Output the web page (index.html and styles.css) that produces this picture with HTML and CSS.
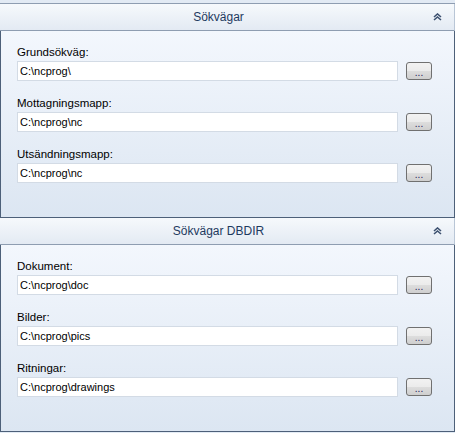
FILE: index.html
```html
<!DOCTYPE html>
<html lang="sv">
<head>
  <meta charset="UTF-8" />
  <title>Sökvägar</title>
  <link rel="stylesheet" href="styles.css">
</head>
<body>
  <div class="top-strip"></div>

  <!-- Sökvägar -->
  <div class="group">
    <div class="group-header">
      <span class="group-title">Sökvägar</span>
      <svg class="collapse" width="9" height="8" viewBox="0 0 9 8">
        <path d="M1 4 L4.5 1 L8 4 M1 7 L4.5 4 L8 7" fill="none" stroke="#3d5170" stroke-width="1.6"/>
      </svg>
    </div>
    <div class="group-body">
      <div class="field">
        <label>Grundsökväg:</label>
        <div class="field-row">
          <input type="text" value="C:\ncprog\" />
          <button class="browse">...</button>
        </div>
      </div>
      <div class="field">
        <label>Mottagningsmapp:</label>
        <div class="field-row">
          <input type="text" value="C:\ncprog\nc" />
          <button class="browse">...</button>
        </div>
      </div>
      <div class="field">
        <label>Utsändningsmapp:</label>
        <div class="field-row">
          <input type="text" value="C:\ncprog\nc" />
          <button class="browse">...</button>
        </div>
      </div>
    </div>
  </div>

  <!-- Sökvägar DBDIR -->
  <div class="group">
    <div class="group-header">
      <span class="group-title">Sökvägar DBDIR</span>
      <svg class="collapse" width="9" height="8" viewBox="0 0 9 8">
        <path d="M1 4 L4.5 1 L8 4 M1 7 L4.5 4 L8 7" fill="none" stroke="#3d5170" stroke-width="1.6"/>
      </svg>
    </div>
    <div class="group-body">
      <div class="field">
        <label>Dokument:</label>
        <div class="field-row">
          <input type="text" value="C:\ncprog\doc" />
          <button class="browse">...</button>
        </div>
      </div>
      <div class="field">
        <label>Bilder:</label>
        <div class="field-row">
          <input type="text" value="C:\ncprog\pics" />
          <button class="browse">...</button>
        </div>
      </div>
      <div class="field">
        <label>Ritningar:</label>
        <div class="field-row">
          <input type="text" value="C:\ncprog\drawings" />
          <button class="browse">...</button>
        </div>
      </div>
    </div>
  </div>
</body>
</html>
```

FILE: styles.css
```css
* {
  box-sizing: border-box;
  margin: 0;
  padding: 0;
}

body {
  font-family: 'Liberation Sans', Arial, sans-serif;
  font-size: 11px;
  background-color: #e4ecf5;
  width: 455px;
}

.top-strip {
  height: 4px;
  background-color: #e2eaf4;
  border-bottom: 1px solid #8e9db1;
}

.group-header {
  height: 27px;
  display: flex;
  align-items: center;
  padding-right: 12px;
  background: linear-gradient(#f6f9fc, #e3eaf3);
  border-bottom: 1px solid #8e9db1;
  border-right: 1px solid #b9c6d6;
}

.group-title {
  flex: 1;
  text-align: center;
  padding-left: 4px;
  color: #1e3a5f;
  font-size: 12px;
}

.collapse {
  display: block;
}

.group-body {
  height: 187px;
  padding: 13px 22px 0 16px;
  background: linear-gradient(#f3f7fd, #dce6f2);
  border: 1px solid #4d6079;
  border-top: none;
  display: flex;
  flex-direction: column;
  gap: 14px;
}

.field label {
  display: block;
  height: 17px;
  line-height: 17px;
  font-size: 11.5px;
  color: #000;
}

.field-row {
  display: flex;
  align-items: center;
  gap: 8px;
}

.field-row input {
  flex: 1;
  height: 20px;
  padding: 0 2px;
  border: 1px solid #d3dbe5;
  background-color: #fff;
  font-family: 'Liberation Sans', Arial, sans-serif;
  font-size: 11px;
  color: #000;
}

.browse {
  width: 26px;
  height: 18px;
  border: 1px solid #707070;
  border-radius: 3px;
  background: linear-gradient(#f2f2f2 0%, #ebebeb 50%, #dddddd 51%, #cfcfcf 100%);
  font-family: 'Liberation Sans', Arial, sans-serif;
  font-size: 10px;
  line-height: 20px;
  color: #1a1a5a;
}
```
